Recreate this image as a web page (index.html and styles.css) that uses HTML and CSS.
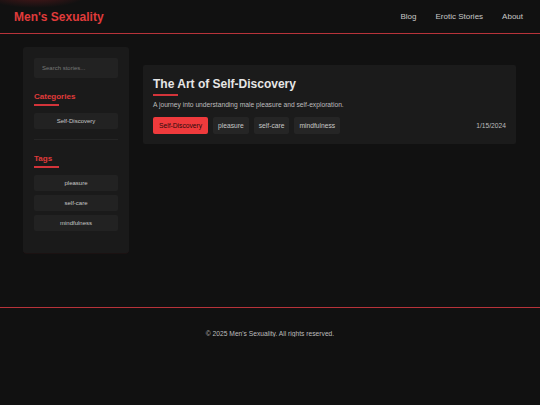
FILE: index.html
```html
<!DOCTYPE html>
<html lang="en">
<head>
	<meta charset="UTF-8">
	<title>Men's Sexuality</title>
	<link rel="stylesheet" href="styles.css">
</head>
<body>
	<header class="site-header">
		<a class="logo" href="#">Men's Sexuality</a>
		<nav class="main-nav">
			<a href="#">Blog</a>
			<a href="#">Erotic Stories</a>
			<a href="#">About</a>
		</nav>
	</header>

	<main class="page">
		<aside class="sidebar">
			<input class="search" type="text" placeholder="Search stories...">

			<h3 class="side-title">Categories</h3>
			<div class="side-list">
				<span class="side-item">Self-Discovery</span>
			</div>

			<hr class="side-divider">

			<h3 class="side-title">Tags</h3>
			<div class="side-list">
				<span class="side-item">pleasure</span>
				<span class="side-item">self-care</span>
				<span class="side-item">mindfulness</span>
			</div>
		</aside>

		<section class="posts">
			<article class="post-card">
				<h2 class="post-title">The Art of Self-Discovery</h2>
				<p class="post-excerpt">A journey into understanding male pleasure and self-exploration.</p>
				<div class="post-meta">
					<div class="post-tags">
						<span class="tag tag-cat">Self-Discovery</span>
						<span class="tag">pleasure</span>
						<span class="tag">self-care</span>
						<span class="tag">mindfulness</span>
					</div>
					<span class="post-date">1/15/2024</span>
				</div>
			</article>
		</section>
	</main>

	<footer class="site-footer">
		<p>&copy; 2025 Men's Sexuality. All rights reserved.</p>
	</footer>
</body>
</html>
```

FILE: styles.css
```css
/*--reset--*/
* {
	box-sizing: border-box;
}
body {
	margin: 0;
	background: #111;
	color: #ddd;
	font-family: "Liberation Sans", Arial, sans-serif;
}
a {
	text-decoration: none;
}

/**
 * header
 */
.site-header {
	position: relative;
	height: 34px;
	display: flex;
	align-items: center;
	justify-content: space-between;
	padding: 0 17px 0 14px;
	border-bottom: 1px solid #b8333a;
	overflow: hidden;
}
.site-header::before {
	content: "";
	position: absolute;
	left: -20px;
	top: -22px;
	width: 110px;
	height: 30px;
	background: radial-gradient(ellipse at center, rgba(150, 30, 35, .55), rgba(150, 30, 35, 0) 70%);
}
.logo {
	position: relative;
	color: #e03b3b;
	font-weight: bold;
	font-size: 12px;
}
.main-nav {
	display: flex;
	gap: 19px;
}
.main-nav a {
	color: #c8c8c8;
	font-size: 8px;
}

/**
 * layout
 */
.page {
	display: flex;
	align-items: flex-start;
	gap: 14px;
	padding: 13px 24px 0 23px;
	height: 273px;
}

/**
 * sidebar
 */
.sidebar {
	width: 106px;
	flex: none;
	background: #1a1a1a;
	border-radius: 3px;
	padding: 11px 11px 22px;
	box-shadow: 0 1px 0 -0.5px rgba(170, 40, 45, .15);
}
.search {
	display: block;
	width: 100%;
	height: 20px;
	border: 0;
	border-radius: 2px;
	background: #222;
	padding: 0 8px;
	font-family: inherit;
	font-size: 6px;
	color: #ddd;
	outline: none;
}
.search::placeholder {
	color: #777;
}
.side-title {
	display: inline-block;
	margin: 14px 0 8px;
	padding-bottom: 4px;
	font-size: 8px;
	color: #e03b3b;
	position: relative;
}
.side-title::after {
	content: "";
	position: absolute;
	left: 0;
	bottom: -1px;
	width: 25px;
	height: 2px;
	background: #d3343a;
}
.side-list {
	display: flex;
	flex-direction: column;
	gap: 4px;
}
.side-item {
	display: block;
	height: 16px;
	line-height: 16px;
	background: #222;
	border-radius: 2px;
	text-align: center;
	font-size: 6px;
	color: #c8c8c8;
}
.side-divider {
	border: 0;
	border-top: 1px solid #252525;
	margin: 10px 0 0;
}

/**
 * posts
 */
.posts {
	flex: 1;
	padding-top: 18px;
}
.post-card {
	background: #1b1b1b;
	border-radius: 2px;
	padding: 9px 10px 10px;
}
.post-title {
	display: inline-block;
	position: relative;
	margin: 0 0 5px;
	padding-bottom: 5px;
	font-size: 12px;
	color: #e6e6e6;
}
.post-title::after {
	content: "";
	position: absolute;
	left: 0;
	bottom: 0;
	width: 25px;
	height: 2px;
	background: #d3343a;
}
.post-excerpt {
	margin: 0 0 9px;
	font-size: 6.7px;
	color: #bdbdbd;
}
.post-meta {
	display: flex;
	align-items: center;
	justify-content: space-between;
}
.post-tags {
	display: flex;
	gap: 5px;
}
.tag {
	height: 17px;
	line-height: 17px;
	padding: 0 5px;
	background: #252525;
	border-radius: 2px;
	font-size: 6.7px;
	color: #c8c8c8;
}
.tag-cat {
	padding: 0 6px;
	background: #ef3a3c;
	color: #2a0a0a;
}
.post-date {
	font-size: 6.7px;
	color: #bdbdbd;
}

/**
 * footer
 */
.site-footer {
	border-top: 1px solid #b8333a;
	padding-top: 22px;
	text-align: center;
}
.site-footer p {
	margin: 0;
	font-size: 6.7px;
	color: #bdbdbd;
}
```
